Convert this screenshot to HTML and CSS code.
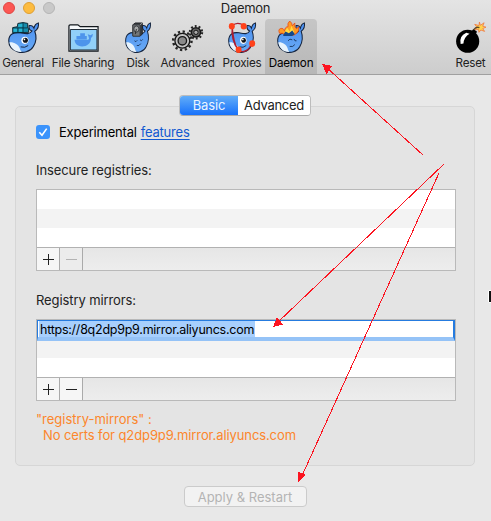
FILE: index.html
```html
<!DOCTYPE html>
<html lang="en">
<head>
<meta charset="utf-8">
<title>Daemon</title>
<link rel="stylesheet" href="styles.css">
</head>
<body>
<svg class="defs" width="0" height="0" aria-hidden="true">
  <defs>
    <linearGradient id="skin" x1="0" y1="0" x2="0" y2="1"><stop offset="0" stop-color="#4a8ff0"/><stop offset="1" stop-color="#69aaf5"/></linearGradient>
    <g id="whale">
      <path d="M.8 20C.8 13 6 10.500 13 11.500C19 12.500 23 13.500 25.500 9.500C23 8.500 22 6 22.500 3.800C24.800 3.500 26.800 4.500 27.600 6.500C28.300 3.500 29.800 1.600 32.300 1C33 4.500 31.500 8 28.500 9.800C30.500 15 30.200 21 27 26C23.500 32 16 33.500 10 31.500C4 29.500 .8 25 .8 20Z" fill="url(#skin)" stroke="#14233c" stroke-width="1.200"/>
      <path d="M1.500 21.500C6 21 11 23.500 12.500 28C13 30 13.500 31 15 31.800C8 32.500 2.500 28 1.500 21.500Z" fill="#e8f3fc"/>
    </g>
    <g id="eye"><circle cx="18" cy="19.500" r="3.800" fill="#fff"/><circle cx="18.500" cy="19.500" r="2.700" fill="#101318"/><circle cx="17.500" cy="18.500" r=".9" fill="#fff"/><path d="M13.500 26.500Q18 28 21.500 25" fill="none" stroke="#14233c"/></g>
  </defs>
</svg>
<main class="window">
  <header class="titlebar">
    <div class="caption">
      <div class="lights"><i class="light close"></i><i class="light minimize"></i><i class="light disabled"></i></div>
      <h1 class="title">Daemon</h1>
    </div>
    <nav class="tools">
      <div class="tool general">
        <svg class="icon" viewBox="0 0 33 33"><use href="#whale"/><use href="#eye"/>
          <path d="M5 6L10 5L10.500 1.500L16 .6L21 1.500V6L22 7V11L5 11.500Z" fill="#168dad" stroke="#07202b"/>
          <path d="M11 2.500L16 2V5H11ZM6 7H10V10.500H6ZM11.500 7H15.500V10.500H11.500Z" fill="#27b5d3"/>
          <path d="M10.500 6V11M16 1V11M5 6.300H21" fill="none" stroke="#07303e" stroke-width=".9"/>
        </svg><span>General</span></div>
      <div class="tool sharing">
        <svg class="icon" viewBox="0 0 33 33">
          <path d="M1 31V4.500Q1 3 2.500 3H10.500L13 5H32V31Z" fill="#f5f8fa" stroke="#11161b" stroke-width="1.300"/>
          <path d="M2.500 8H30.800V29.800H2.500Z" fill="#91d0f8" stroke="#14202b"/>
          <path d="M7 19H21.500Q23 18 22 16L21 13L24 14L26.500 12.500L26 15.500L24.500 17C24.500 23 20 26 15 26C10 26 7 23 7 19Z" fill="#4d94eb"/>
          <path d="M9 15H13V12H18V15H20V18.500H9Z" fill="#4d94eb"/>
        </svg><span>File Sharing</span></div>
      <div class="tool disk">
        <svg class="icon disk-icon" viewBox="0 0 33 33" preserveAspectRatio="none"><use href="#whale"/>
          <path d="M10 3L13 1H22V13L19 15H10Z" fill="#393d42" stroke="#191b1f"/><path d="M10 3H19V15H10Z" fill="#74777a" stroke="#3e4042"/><path d="M19 3L22 1" stroke="#a7a7a7"/>
          <circle cx="14.500" cy="7.500" r="3.300" fill="#a6a8a9" stroke="#303236"/><path d="M14.500 7.500L13 13" stroke="#222"/>
          <path d="M12 20Q14 22 15.500 19.500M19 19Q21 21 22.500 18.500M15 25Q18 26 20 23" fill="none" stroke="#173256"/>
        </svg><span>Disk</span></div>
      <div class="tool advanced">
        <svg class="icon" viewBox="0 0 33 33">
          <circle cx="11" cy="20" r="9.800" fill="none" stroke="#252525" stroke-width="2.600" stroke-dasharray="2.450 2.681"/>
          <circle cx="11" cy="20" r="7.900" fill="#c4c4c4" stroke="#151515" stroke-width="1.400"/>
          <circle cx="11" cy="20" r="4.500" fill="#8a8a8a" stroke="#171717" stroke-width="1.400"/>
          <circle cx="25.500" cy="11" r="6.600" fill="none" stroke="#252525" stroke-width="2.200" stroke-dasharray="2 2.147"/>
          <circle cx="25.500" cy="11" r="4.900" fill="#666" stroke="#171717" stroke-width="1.700"/>
          <circle cx="25.500" cy="11" r="2.300" fill="#aaa" stroke="#111"/>
        </svg><span>Advanced</span></div>
      <div class="tool proxies">
        <svg class="icon proxy-icon" viewBox="0 0 33 33" preserveAspectRatio="none"><use href="#whale"/><use href="#eye"/>
          <path d="M5 4Q11-1 19 4M5 4Q3 19 12 30Q22 35 28 23M5 4Q6 21 12 30" fill="none" stroke="#a91e32" stroke-width="1.300"/>
          <g fill="#ff421b"><circle cx="4.500" cy="4.500" r="3.500"/><circle cx="18.500" cy="4.500" r="3.500"/><circle cx="12.500" cy="29.500" r="3.500"/><circle cx="28.500" cy="23" r="3.500"/></g>
        </svg><span>Proxies</span></div>
      <div class="tool daemon selected">
        <svg class="icon daemon-icon" viewBox="0 0 33 33" preserveAspectRatio="none"><use href="#whale"/>
          <path d="M3 12Q1 8 4 7Q8 6 9 10Q9 5 13 5Q12 1 15-1Q18 1 18 4L21 1Q20 6 23 7L26 5Q26 10 23 12L20 14L9 14L7 12Z" fill="#ff9b22" stroke="#e84a18" stroke-width=".9"/>
          <path d="M9 10L12 6L15 10L17 4L20 10L19 14H9Z" fill="#ffd942"/>
          <path d="M7 14L10 10L14 12L18 9L21 13L18 15H8Z" fill="#154889"/>
          <path d="M13 20Q15 17 18 19M20 18Q21 21 23 20M15 26Q19 27 21 24" fill="none" stroke="#173256"/>
        </svg><span>Daemon</span></div>
      <div class="tool reset">
        <svg class="icon" viewBox="0 0 33 33">
          <path d="M26 0L27 3.500L31 .8L29.500 4.500L33 5.500L29.500 7L31.500 10L27.500 8.500L25.500 11L25 8L21 8.500L23.500 5.800L21 2.500L25.500 3.800Z" fill="#ffd34d" stroke="#ef713e" stroke-width=".8"/>
          <path d="M17 11L19.500 7.500L23.500 10.500L21 14Z"/><path d="M20 8Q22.500 4.500 26 6" fill="none" stroke="#5e4423" stroke-width="1.400"/>
          <circle cx="13.500" cy="20.500" r="12.300"/><path d="M6 23.500Q4 15 12 11.500L15.500 12.500Q9.500 16 9 23Z" fill="#fff"/>
        </svg><span>Reset</span></div>
    </nav>
  </header>
  <section class="content">
    <div class="panel">
      <div class="tabs"><button class="tab active">Basic</button><button class="tab">Advanced</button></div>
      <div class="option"><span class="check"><svg viewBox="0 0 14 14"><path d="M3.300 7.300L6 10.200L10.700 3.600" fill="none" stroke="#fff" stroke-width="1.600"/></svg></span><span class="option-name">Experimental</span><a class="link">features</a></div>
      <h2 class="label insecure">Insecure registries:</h2>
      <div class="list">
        <div class="row"></div><div class="row alt"></div><div class="row"></div>
        <div class="actions"><button class="action"><i class="glyph plus"></i></button><button class="action off"><i class="glyph"></i></button></div>
      </div>
      <h2 class="label mirrors">Registry mirrors:</h2>
      <div class="list">
        <div class="row editing"><span class="selection">https://8q2dp9p9.mirror.aliyuncs.com</span></div><div class="row alt short"></div><div class="row"></div>
        <div class="actions"><button class="action"><i class="glyph plus"></i></button><button class="action"><i class="glyph"></i></button></div>
      </div>
      <div class="error"><p class="error-key">"registry-mirrors" :</p><p class="error-detail">No certs for q2dp9p9.mirror.aliyuncs.com</p></div>
    </div>
    <button class="apply">Apply &amp; Restart</button>
  </section>
  <svg class="arrows" viewBox="0 0 491 521" aria-hidden="true">
    <g stroke="#fc1420" stroke-width="1" fill="#fc1420" shape-rendering="crispEdges">
      <path d="M423 155L326 67M444 164L277 323M439 173L301 478" fill="none"/>
      <path d="M322 64L332 66L326.500 74ZM273 327L277 317L283 324.500ZM298 482V471.500L306 475Z" stroke="none"/>
    </g>
    <path d="M488.500 290.500V302.500H492V290.500Z" fill="#111" stroke="#fff"/>
  </svg>
</main>
</body>
</html>
```
FILE: styles.css
```css
* { box-sizing: border-box; }
body { margin: 0; background: #e8e8e8; color: #222; font-family: Inter, "Liberation Sans", sans-serif; font-size: 13px; letter-spacing: -0.1px; }
button { font: inherit; letter-spacing: inherit; padding: 0; margin: 0; }
h1, h2, p { margin: 0; font-weight: 400; font-size: inherit; }
.defs { position: absolute; }
.window { position: relative; width: 491px; height: 521px; overflow: hidden; }
.titlebar { height: 75px; background: linear-gradient(#e4e4e4, #cdcdcd); border-bottom: 1px solid #a0a0a0; }
.caption { height: 19px; display: grid; grid-template-columns: 60px 1fr 60px; }
.lights { display: flex; gap: 8px; padding: 2px 0 0 3px; }
.light { width: 12px; height: 12px; border-radius: 50%; border: 1px solid; flex: none; }
.close { background: #fc5753; border-color: #df4744; }
.minimize { background: #fdbc40; border-color: #de9f34; }
.disabled { background: #c9c9c9; border-color: #b5b5b5; }
.title { text-align: center; line-height: 17px; letter-spacing: -0.3px; }
.tools { display: flex; height: 55px; }
.tool { flex: none; display: flex; flex-direction: column; align-items: center; font-size: 11.7px; letter-spacing: -0.22px; line-height: 16px; padding-top: 3px; white-space: nowrap; }
.icon { width: 31px; height: 31px; overflow: visible; margin-bottom: 2px; }
.disk-icon { width: 26px; }
.proxy-icon, .daemon-icon { width: 28px; }
.general { width: 46px; }
.sharing { width: 74px; }
.disk { width: 36px; }
.advanced { width: 63px; }
.proxies { width: 46px; }
.daemon { width: 52px; }
.reset { width: 41px; margin-left: auto; }
.selected { background: linear-gradient(#c6c6c6, #b7b7b7); border-radius: 4px 4px 0 0; color: #000; }
.content { padding: 31px 16px 0 15px; display: flex; flex-direction: column; align-items: center; }
.panel { width: 460px; height: 360px; background: #e4e4e4; border: 1px solid #d6d6d6; border-radius: 5px; padding: 0 18px 0 20px; }
.tabs { width: 132px; height: 21px; margin: -12px auto 0; display: flex; border-radius: 4px; position: relative; left: -1px; overflow: hidden; border: 1px solid #bcbcbc; border-bottom-color: #a9a9a9; background: #fff; }
.tab { border: 0; background: #fff; color: #222; width: 72px; line-height: 19px; letter-spacing: -0.3px; }
.tab.active { width: 58px; background: linear-gradient(#62adf8, #1771fb); color: #e9f4ff; letter-spacing: -0.1px; }
.option { display: flex; align-items: center; height: 18px; margin-top: 7px; color: #000; }
.check { width: 14px; height: 14px; border-radius: 3px; background: #3b93fb; display: flex; margin-right: 9px; }
.option-name { margin-right: 4px; letter-spacing: -0.2px; }
.link { color: #1159d1; text-decoration: underline; text-underline-offset: 2px; letter-spacing: -0.2px; }
.label { line-height: 18px; height: 18px; }
.insecure { margin-top: 20px; }
.mirrors { margin-top: 20px; }
.list { height: 82px; margin-top: 10px; border: 1px solid #b9b9b9; background: #fff; width: 420px; }
.row { height: 19px; background: #fff; }
.alt { background: #f3f3f3; }
.editing { height: 21px; border: 2px solid #257bdf; border-top-width: 1px; border-left-width: 1px; border-bottom: 4px solid #95c3f7; padding: 0 0 0 1px; color: #000; }
.selection { display: block; width: 216px; height: 16px; line-height: 17px; font-size: 12.5px; letter-spacing: -0.25px; background: #a7cffd; white-space: nowrap; padding-left: 1px; }
.short { height: 17px; }
.actions { height: 23px; border-top: 1px solid #b1b1b1; background: linear-gradient(#e6e6e6, #ededed); display: flex; }
.action { width: 23px; height: 22px; border: 0; border-right: 1px solid #aaa; background: #f6f6f6; color: #222; display: grid; place-items: center; }
.off { background: #ececec; color: #b3b3b3; }
.glyph { width: 11px; height: 11px; background: linear-gradient(currentColor, currentColor) center / 11px 1px no-repeat; }
.plus { background: linear-gradient(currentColor, currentColor) center / 11px 1px no-repeat, linear-gradient(currentColor, currentColor) center / 1px 11px no-repeat; }
.error { color: #fc862b; margin-top: 10px; line-height: 16px; }
.error-key { letter-spacing: 0; }
.error-detail { padding-left: 7px; }
.apply { width: 123px; height: 21px; margin-top: 20px; border: 1px solid #cbcbcb; border-radius: 4px; background: #f2f2f2; color: #b4b4b4; letter-spacing: 0; }
.arrows { position: absolute; inset: 0; width: 491px; height: 521px; pointer-events: none; }
```
